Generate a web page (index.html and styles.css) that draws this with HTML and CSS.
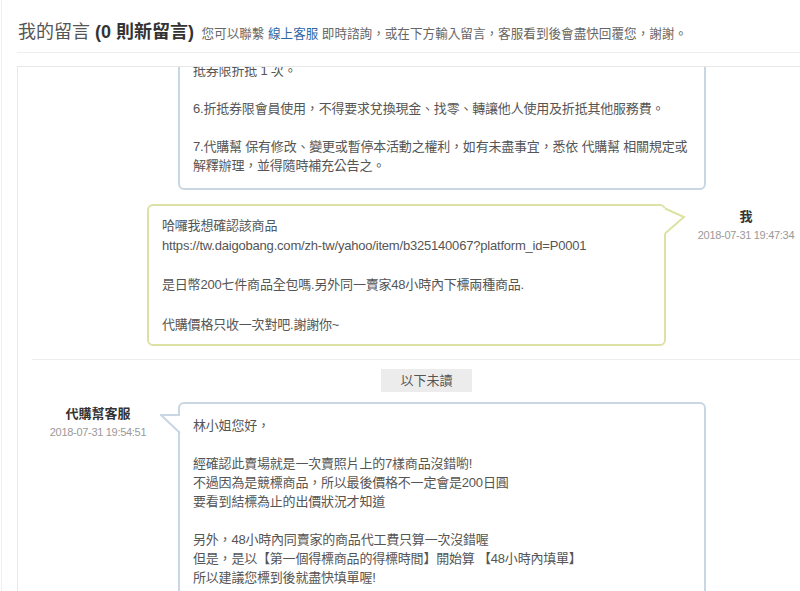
FILE: index.html
```html
<!DOCTYPE html>
<html lang="zh-Hant">
<head>
<meta charset="utf-8">
<title>我的留言</title>
<link rel="stylesheet" href="styles.css">
</head>
<body>
<div class="page">
  <div class="header">
    <span class="title">我的留言 <b>(0 則新留言)</b></span>
    <span class="sub">您可以聯繫 <a class="link">線上客服</a> 即時諮詢，或在下方輸入留言，客服看到後會盡快回覆您，謝謝。</span>
  </div>
  <div class="panel">
    <div class="list">
      <div class="row agent">
        <div class="who"></div>
        <div class="bubble blue first">抵券限折抵 1 次。

6.折抵券限會員使用，不得要求兌換現金、找零、轉讓他人使用及折抵其他服務費。

7.代購幫 保有修改、變更或暫停本活動之權利，如有未盡事宜，悉依 代購幫 相關規定或
解釋辦理，並得隨時補充公告之。</div>
      </div>
      <div class="row user">
        <div class="bubble yellow">哈囉我想確認該商品
https://tw.daigobang.com/zh-tw/yahoo/item/b325140067?platform_id=P0001

是日幣200七件商品全包嗎.另外同一賣家48小時內下標兩種商品.

代購價格只收一次對吧.謝謝你~<svg class="tail tail-right" width="22" height="30" viewBox="0 0 22 30"><polygon points="0,2 21,11 0,28" fill="#fff"/><polyline points="1,2.5 20,11 1,27.5" fill="none" stroke="#dde2a4" stroke-width="2"/></svg></div>
        <div class="who"><div class="name">我</div><div class="date">2018-07-31 19:47:34</div></div>
      </div>
      <div class="divider"><span class="unread">以下未讀</span></div>
      <div class="row agent">
        <div class="who"><div class="name">代購幫客服</div><div class="date">2018-07-31 19:54:51</div></div>
        <div class="bubble blue last">林小姐您好，

經確認此賣場就是一次賣照片上的7樣商品沒錯喲!
不過因為是競標商品，所以最後價格不一定會是200日圓
要看到結標為止的出價狀況才知道

另外，48小時內同賣家的商品代工費只算一次沒錯喔
但是，是以【第一個得標商品的得標時間】開始算 【48小時內填單】
所以建議您標到後就盡快填單喔!<svg class="tail tail-left" width="22" height="24" viewBox="0 0 22 24"><polygon points="22,2 1,2 22,22" fill="#fff"/><polyline points="20,2 1,2 20,20" fill="none" stroke="#c9d6e3" stroke-width="2"/></svg></div>
      </div>
    </div>
  </div>
</div>
</body>
</html>
```
FILE: styles.css
```css
html, body {
  margin: 0;
  height: 591px;
  overflow: hidden;
  background: #fff;
}
body {
  font-family: "Liberation Sans", "Noto Sans CJK TC", sans-serif;
  color: #555;
}
.page {
  margin-left: 1px;
  border-left: 1px solid #f0f0f0;
  padding-left: 15px;
  height: 100%;
}
.header {
  padding: 22px 0 9px 1px;
  border-bottom: 1px solid #eeeeee;
  line-height: 20px;
  white-space: nowrap;
}
.title {
  font-size: 18px;
  color: #555;
}
.title b {
  color: #333;
}
.sub {
  font-size: 12.6px;
  line-height: 1;
  color: #666;
  margin-left: 3px;
}
.link {
  color: #2f67a3;
}
.panel {
  margin-top: 13px;
  border-top: 1px solid #e8e8e8;
  border-left: 1px solid #e8e8e8;
  width: 808px;
  height: 600px;
  overflow: hidden;
}
.list {
  margin-top: -22px;
}
.row {
  display: flex;
  align-items: flex-start;
}
.row.user {
  margin-top: 14px;
}
.who {
  width: 160px;
  flex: none;
  text-align: center;
}
.agent .who {
  padding-top: 3px;
}
.user .who {
  padding-top: 4px;
}
.name {
  font-size: 13px;
  font-weight: bold;
  color: #333;
  line-height: 18px;
}
.date {
  font-size: 11px;
  color: #999;
  letter-spacing: -0.3px;
  line-height: 18px;
}
.bubble {
  position: relative;
  box-sizing: border-box;
  border: 2px solid;
  border-radius: 6px;
  background: #fff;
  font-size: 13px;
  white-space: pre;
  color: #555;
  flex: none;
  letter-spacing: -0.2px;
}
.blue {
  border-color: #c9d6e3;
  width: 528px;
  line-height: 19px;
}
.blue.first {
  padding: 14px 13px 13px;
}
.blue.last {
  padding: 12px 13px 40px;
}
.yellow {
  border-color: #dde2a4;
  width: 519px;
  margin-left: 129px;
  line-height: 19.8px;
  padding: 10px 13px 9px;
}
.tail {
  position: absolute;
  display: block;
}
.tail-right {
  left: 100%;
  top: 0;
}
.tail-left {
  right: 100%;
  top: 9px;
  margin-right: -2px;
}
.divider {
  margin: 13px 5px 0 14px;
  border-top: 1px solid #eeeeee;
  padding-top: 9px;
  text-align: center;
}
.unread {
  display: inline-block;
  background: #ececec;
  color: #555;
  font-size: 13px;
  line-height: 23px;
  padding: 0 19.5px;
  vertical-align: top;
}
.divider + .row {
  margin-top: 10px;
}
```
